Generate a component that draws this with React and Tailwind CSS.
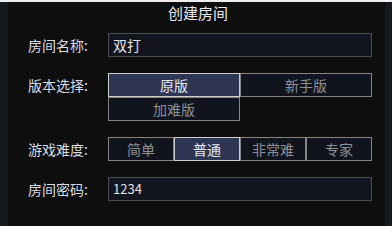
import React from "react";

const font = { fontFamily: '"Noto Sans CJK SC", "Noto Sans", sans-serif' };

function Label({ children }) {
  return (
    <div className="w-[80px] h-[24px] flex items-center text-[14px] text-[#d9dce3] shrink-0">
      {children}
    </div>
  );
}

function Opt({ label, selected, w }) {
  return (
    <div
      className={
        "h-[24px] flex items-center justify-center text-[14px] border " +
        (selected
          ? "bg-[#2f3653] border-[#cfcfcf] text-[#e6e8ef]"
          : "bg-[#11141c] border-[#858585] text-[#8c9099]")
      }
      style={{ width: w }}
    >
      {label}
    </div>
  );
}

export default function App() {
  return (
    <div className="w-[392px] h-[226px] bg-[#15181d] flex flex-col overflow-hidden" style={font}>
      <div className="h-[2px] bg-[#eeeeee] shrink-0" />
      <div className="ml-[8px] w-[377px] flex-1 bg-[#0e0e0f] pl-[20px] flex flex-col">
        <div className="h-[22px] leading-[22px] text-[15px] text-[#e8eaee] text-center pr-[17px]">
          创建房间
        </div>
        <div className="mt-[9px] flex flex-col gap-[16px]">
          <div className="flex">
            <Label>房间名称:</Label>
            <div className="w-[264px] h-[24px] border border-[#4a4c52] bg-[#12151e] flex items-center px-[4px] text-[14px] text-[#e4e6ec]">
              双打
            </div>
          </div>
          <div className="flex items-start">
            <Label>版本选择:</Label>
            <div className="grid grid-cols-[132px_132px]">
              <Opt label="原版" selected w={132} />
              <Opt label="新手版" w={132} />
              <Opt label="加难版" w={132} />
            </div>
          </div>
          <div className="flex">
            <Label>游戏难度:</Label>
            <div className="flex">
              <Opt label="简单" w={66} />
              <Opt label="普通" selected w={66} />
              <Opt label="非常难" w={66} />
              <Opt label="专家" w={66} />
            </div>
          </div>
          <div className="flex">
            <Label>房间密码:</Label>
            <div className="w-[264px] h-[24px] border border-[#4a4c52] bg-[#12151e] flex items-center px-[4px] text-[13px] text-[#e4e6ec]">
              1234
            </div>
          </div>
        </div>
      </div>
    </div>
  );
}
